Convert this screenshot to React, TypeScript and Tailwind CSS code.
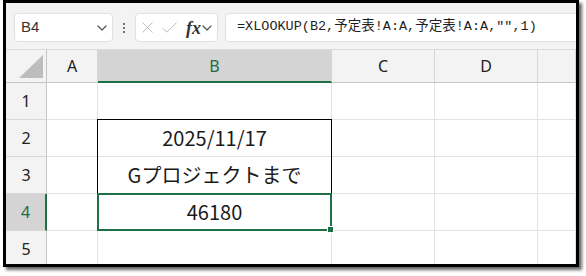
import React from "react";

const colStart = ["col-start-1", "col-start-2", "col-start-3", "col-start-4", "col-start-5", "col-start-6"];
const rowStart = ["row-start-1", "row-start-2", "row-start-3", "row-start-4", "row-start-5", "row-start-6"];

const cols = ["A", "B", "C", "D", ""];
const rows = [1, 2, 3, 4, 5];

const cellText: Record<string, string> = {
  "B2": "2025/11/17",
  "B3": "Gプロジェクトまで",
  "B4": "46180",
};

function Chevron({ className = "" }: { className?: string }) {
  return (
    <svg width="10" height="6" viewBox="0 0 10 6" className={className}>
      <path d="M1 1 L5 5 L9 1" fill="none" stroke="#555" strokeWidth="1.2" strokeLinecap="round" strokeLinejoin="round" />
    </svg>
  );
}

export default function App() {
  const cellFont = { fontFamily: '"Noto Sans CJK JP", "Noto Sans", sans-serif' };
  return (
    <div className="w-[586px] h-[276px] bg-white overflow-hidden">
      <div className="ml-[3px] w-[576px] h-[267px] border-[3px] border-black shadow-[3px_3px_3px_rgba(0,0,0,0.6)] flex flex-col overflow-hidden bg-white">
        {/* Toolbar */}
        <div className="h-[46px] shrink-0 bg-[#f3f3f3] flex items-start pt-[10px] pl-[8px] gap-0">
          <div className="w-[99px] h-[29px] bg-white border border-[#e1e1e1] rounded-[4px] flex items-center pl-[6px] pr-[5px] justify-between">
            <span className="text-[15px] text-[#333]" style={{ fontFamily: '"Liberation Sans", Arial, sans-serif' }}>B4</span>
            <Chevron />
          </div>
          <div className="w-[22px] h-[29px] flex flex-col items-center justify-center gap-[2px]">
            <span className="w-[2px] h-[2px] bg-[#444] rounded-full" />
            <span className="w-[2px] h-[2px] bg-[#444] rounded-full" />
            <span className="w-[2px] h-[2px] bg-[#444] rounded-full" />
          </div>
          <div className="w-[83px] h-[29px] bg-white border border-[#e1e1e1] rounded-[4px] flex items-center pl-[6px] gap-[9px]">
            <svg width="11" height="11" viewBox="0 0 11 11">
              <path d="M0.5 0.5 L10.5 10.5 M10.5 0.5 L0.5 10.5" stroke="#bdbdbd" strokeWidth="1" />
            </svg>
            <svg width="15" height="11" viewBox="0 0 15 11">
              <path d="M0.5 6 L5 10.2 L14.5 0.5" fill="none" stroke="#bdbdbd" strokeWidth="1" />
            </svg>
            <div className="flex items-center gap-[1px]">
              <span className="text-[18px] italic font-bold text-[#333] leading-none" style={{ fontFamily: '"Liberation Serif", "Times New Roman", serif' }}>fx</span>
              <Chevron />
            </div>
          </div>
          <div className="ml-[7px] flex-1 h-[29px] bg-white border border-[#e1e1e1] rounded-l-[4px] border-r-0 flex items-center pl-[11px]">
            <span className="text-[13.5px] text-[#1f1f1f] whitespace-nowrap" style={{ fontFamily: '"Liberation Mono", "Noto Sans CJK JP", monospace' }}>
              =XLOOKUP(B2,予定表!A:A,予定表!A:A,"",1)
            </span>
          </div>
        </div>

        {/* Grid */}
        <div className="flex-1 overflow-hidden">
          <div className="grid grid-cols-[41px_51px_234px_103px_103px_38px] grid-rows-[34px_37px_37px_37px_37px_37px]">
            {/* Corner */}
            <div className={`${colStart[0]} ${rowStart[0]} bg-[#f3f3f3] border-t border-[#dcdcdc] border-r border-r-[#c6c6c6] border-b border-b-[#c6c6c6] flex items-end justify-end pr-[3px] pb-[4px]`}>
              <svg width="24" height="23" viewBox="0 0 24 23">
                <polygon points="0,23 24,23 24,0" fill="#bdbdbd" />
              </svg>
            </div>
            {/* Column headers */}
            {cols.map((c, i) => {
              const sel = c === "B";
              return (
                <div
                  key={"h" + i}
                  className={`${colStart[i + 1]} ${rowStart[0]} border-t border-t-[#dcdcdc] border-r border-r-[#d6d6d6] flex justify-center pt-[4px] text-[16px] ${sel ? "bg-[#d4d4d4] border-b-2 border-b-[#1e7145] text-[#1e6b43]" : "bg-[#f3f3f3] border-b border-b-[#c6c6c6] text-[#222]"}`}
                  style={{ fontFamily: '"Noto Sans", sans-serif' }}
                >
                  {c}
                </div>
              );
            })}
            {/* Rows */}
            {rows.map((r, ri) => {
              const sel = r === 4;
              return (
                <React.Fragment key={"r" + r}>
                  <div
                    className={`${colStart[0]} ${rowStart[ri + 1]} border-b border-b-[#d9d9d9] flex items-center justify-center text-[16px] ${sel ? "bg-[#d4d4d4] border-r-2 border-r-[#1e7145] text-[#1e6b43]" : "bg-[#f3f3f3] border-r border-r-[#c6c6c6] text-[#222]"}`}
                    style={{ fontFamily: '"Noto Sans", sans-serif' }}
                  >
                    {r}
                  </div>
                  {cols.map((c, ci) => {
                    const key = c + r;
                    const txt = cellText[key];
                    return (
                      <div
                        key={key + ci}
                        className={`${colStart[ci + 1]} ${rowStart[ri + 1]} border-r border-b border-[#e2e2e2] flex items-center justify-center text-[20px] text-[#1a1a1a] whitespace-nowrap`}
                        style={cellFont}
                      >
                        {txt ?? ""}
                      </div>
                    );
                  })}
                </React.Fragment>
              );
            })}
            {/* Black border around B2:B3 */}
            <div className="col-start-3 row-start-3 row-span-2 -ml-px -mt-px border-[1.5px] border-black pointer-events-none" />
            {/* Selection B4 */}
            <div className="col-start-3 row-start-5 -ml-px -mt-px border-2 border-[#1e7145] relative pointer-events-none">
              <div className="absolute -right-[4px] -bottom-[4px] w-[7px] h-[7px] bg-[#1e7145] border border-white" />
            </div>
          </div>
        </div>
      </div>
    </div>
  );
}
